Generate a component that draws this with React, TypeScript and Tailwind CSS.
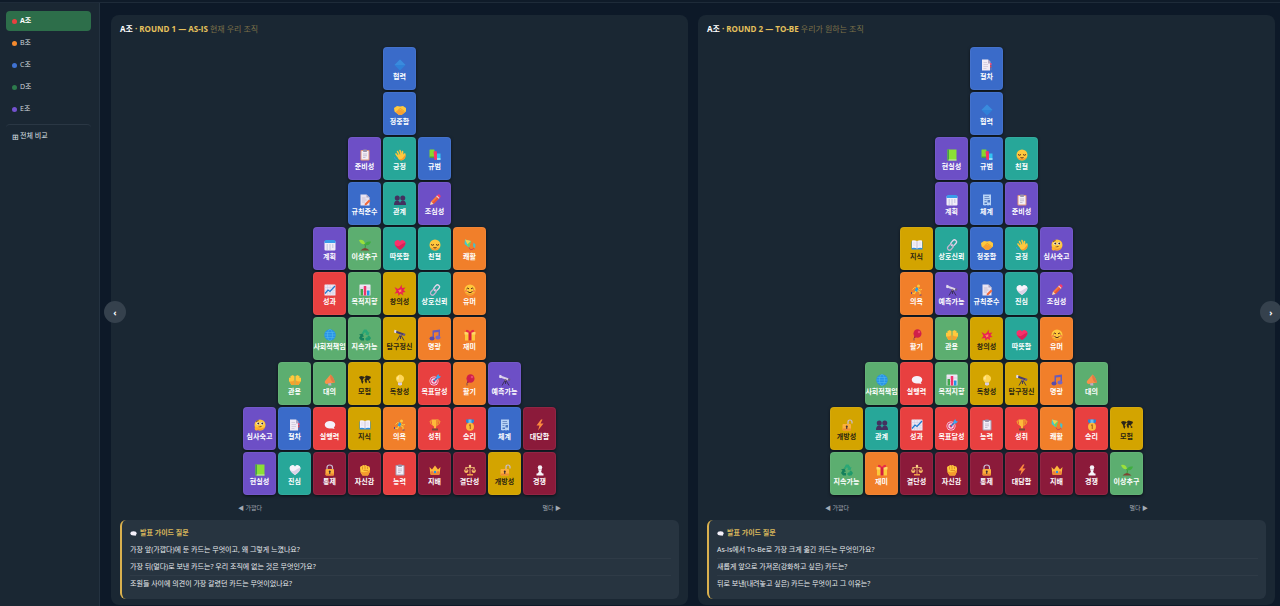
import React, { useState } from 'react';
import clsx from 'clsx';

const toneClass = {
  blue: 'bg-[#3a6bc9] text-white',
  teal: 'bg-[#27a799] text-white',
  purple: 'bg-[#6d4fc6] text-white',
  green: 'bg-[#5cae70] text-white',
  orange: 'bg-[#f17f2a] text-white',
  yellow: 'bg-[#d3a400] text-[#2b2412]',
  red: 'bg-[#e84040] text-white',
  maroon: 'bg-[#8b1a3a] text-white',
};

type Tone = keyof typeof toneClass;

// All drawings share a 24x24 view box
const clipboard = (board: string) => (
  <>
    <rect x="3" y="2" width="18" height="21" rx="2" fill={board} />
    <rect x="5" y="4" width="14" height="17" fill="#f3eef8" />
    <rect x="8" y="1" width="8" height="5" rx="1.5" fill="#9b93ab" />
    <path d="M8 10h8M8 13.5h8M8 17h5" stroke="#a99fb8" strokeWidth="1.2" />
  </>
);

const telescope = (tube: string, legs: string) => (
  <>
    <path d="M13 11 6 23M13 11l7 12M13 11v9" stroke={legs} strokeWidth="2" />
    <path d="m3 3 17 6-1.5 4L2 7Z" fill={tube} />
    <path d="m1 1.5 4 1L4 8.5 0 7Z" fill="#e2daf0" />
    <path d="m19 8 4 2-1.5 4-4-1Z" fill="#6b5a86" />
    <circle cx="13" cy="12" r="2" fill="#8a6f7d" />
  </>
);

const face = (
  <>
    <circle cx="12" cy="12" r="11" fill="#ffc83d" />
    <path d="M2 16a11 11 0 0 0 20 0q-10 7-20 0Z" fill="#f59a2e" />
  </>
);

const lock = (shackle: string) => (
  <>
    <path d={shackle} fill="none" stroke="#c9bcd3" strokeWidth="2.4" />
    <rect x="3" y="10" width="17" height="13" rx="2" fill="#fcb03c" />
    <path d="M3 19h17v2a2 2 0 0 1-2 2H5a2 2 0 0 1-2-2Z" fill="#ee8b35" />
    <circle cx="11.5" cy="15" r="2" fill="#3d2a35" />
    <path d="M10.5 15h2v5h-2z" fill="#3d2a35" />
  </>
);

const heartPath = 'M12 22C5 17 1 13 1 8a6 6 0 0 1 11-3 6 6 0 0 1 11 3c0 5-4 9-11 14Z';

const icons: Record<string, React.ReactNode> = {
  diamond: (
    <>
      <path d="M12 1 23 12 12 23 1 12Z" fill="#2f80d8" />
      <path d="M12 1 23 12H1Z" fill="#3a8bdd" />
    </>
  ),
  handshake: (
    <>
      <path d="M0 8 6 4l6 1 6-1 6 4v7l-9 7h-5l-9-7Z" fill="#ffc83d" />
      <path d="m3 16 5-4 5-1 9 6-7 5h-5Z" fill="#f7a032" />
      <path d="m9 11 4-2 8 6" stroke="#dd8524" strokeWidth="1.2" fill="none" />
    </>
  ),
  clipboard: clipboard('#e49a78'),
  clipboardGrey: clipboard('#a6a0b5'),
  wave: (
    <>
      <path d="m7 14-3-4M10 11 7 5M14 10l-2-7M17 11l0-6" stroke="#ffc83d" strokeWidth="3.2" strokeLinecap="round" />
      <path d="m5 13 12-4 2 2q1-4 4-2 1 9-4 12-6 4-10-1Z" fill="#ffc83d" />
      <path d="M9 21q8 0 10-5l4-5q1 7-4 10-5 3-10 0Z" fill="#f59a2e" />
      <path d="M1 16q0 5 5 6" stroke="#3a9ce0" strokeWidth="2" fill="none" />
    </>
  ),
  books: (
    <>
      <rect x="1" y="1" width="10" height="16" rx="1" fill="#86d72f" />
      <path d="M1 15h10v3H2z" fill="#4c9a48" />
      <path d="m9 5 6-1 3 17-7 1Z" fill="#f8336a" />
      <path d="M16 9h7v13h-7z" fill="#32c3f3" />
      <path d="M16 19h7v2h-7z" fill="#e5f7ff" />
    </>
  ),
  memo: (
    <>
      <path d="M3 1h12l6 6v16H3Z" fill="#e9e3f1" />
      <path d="m15 1 6 6h-6Z" fill="#b0a5bf" />
      <path d="M6 8h7M6 12h9M6 16h6" stroke="#b9afc6" strokeWidth="1.3" />
      <path d="m12 19 8-8 3 3-8 8-4 1Z" fill="#f2683a" />
    </>
  ),
  people: (
    <>
      <circle cx="6.5" cy="8" r="5" fill="#43305f" />
      <circle cx="17.5" cy="8" r="5" fill="#43305f" />
      <path d="M0 22q0-8 5-9h3q3 1 4 5 1-4 4-5h3q5 1 5 9Z" fill="#43305f" />
    </>
  ),
  pencil: (
    <>
      <path d="m4 15 12-12 5 5L9 20Z" fill="#fa7a3c" />
      <path d="m6.5 17.5 12-12L21 8 9 20Z" fill="#e5523b" />
      <path d="m16 3 2-2q2-1 4 1t1 4l-2 2Z" fill="#f83b6b" />
      <path d="m14.5 4.5 1.5-1.5 5 5-1.5 1.5Z" fill="#e0d6ea" />
      <path d="m4 15 5 5-7 2Z" fill="#ffd9a8" />
    </>
  ),
  calendar: (
    <>
      <rect x="1" y="4" width="22" height="19" rx="2" fill="#f1edf8" />
      <path d="M1 8V5q0-3 3-3h16q3 0 3 3v3Z" fill="#3a9cea" />
      <path d="M5 12h3M10.5 12h3M16 12h3M5 16h3M10.5 16h3M16 16h3M5 20h3M10.5 20h3" stroke="#a9aed6" strokeWidth="1.8" />
    </>
  ),
  seedling: (
    <>
      <path d="M12 19q2-6-1-10" stroke="#3d9a3c" strokeWidth="2.2" fill="none" />
      <path d="M12 10Q3 12 0 2q10-2 12 8Z" fill="#9be03a" />
      <path d="M12 12q0-8 12-7-2 9-12 7Z" fill="#3fae3f" />
      <path d="M3 23q9-10 18 0Z" fill="#7d4533" />
    </>
  ),
  heart: (
    <>
      <path d={heartPath} fill="#f8316b" />
      <path d="M12 22C7 19 3 15 2 11q5 6 10 2t11-6c0 6-4 10-11 15Z" fill="#d92258" />
    </>
  ),
  whiteHeart: (
    <>
      <path d={heartPath} fill="#f7f3fb" />
      <path d="M12 22C7 19 3 15 2 11q5 6 10 2t11-6c0 6-4 10-11 15Z" fill="#ddd3e8" />
    </>
  ),
  relieved: (
    <>
      {face}
      <path d="M4 11q3 3 6 0M14 11q3 3 6 0M9 17q3 2 6 0" stroke="#5c2c1a" strokeWidth="2" fill="none" />
    </>
  ),
  smile: (
    <>
      {face}
      <circle cx="4" cy="14" r="2" fill="#f9764b" />
      <circle cx="20" cy="14" r="2" fill="#f9764b" />
      <path d="M5 10q2.5-4 5 0M14 10q2.5-4 5 0M7 15q5 5 10 0" stroke="#5c2c1a" strokeWidth="2" fill="none" />
    </>
  ),
  thinking: (
    <>
      {face}
      <circle cx="8" cy="9" r="3" fill="#fff" />
      <circle cx="16" cy="9" r="3" fill="#fff" />
      <circle cx="8.5" cy="9" r="2" fill="#3d2320" />
      <circle cx="16.5" cy="9" r="2" fill="#3d2320" />
      <path d="m4 5 5-2M9 16l6-1" stroke="#5c2c1a" strokeWidth="1.6" />
      <path d="M2 16q2-2 3 1l6-2q2 1 0 2l-4 2q2 4-3 4-4-2-2-7Z" fill="#ffb02e" />
    </>
  ),
  kite: (
    <>
      <path d="M2 1 14 4 10 17 1 10Z" fill="#3fcbd0" />
      <path d="M2 1 14 4 7 11Z" fill="#f5d04c" />
      <path d="m14 4-4 13-3-6Z" fill="#7bd44a" />
      <path d="M10 17q3 7 6 4t5-1" stroke="#c63a5f" strokeWidth="1.8" fill="none" />
      <path d="m19 7 4 4-1 8-4-5Z" fill="#42c2ce" />
    </>
  ),
  chartUp: (
    <>
      <rect x="1" y="1" width="22" height="22" rx="1" fill="#ece7f3" />
      <path d="M1 7h22M1 12.5h22M1 18h22M7 1v22M12.5 1v22M18 1v22" stroke="#cbc3d8" strokeWidth=".8" />
      <path d="m2 19 6-7 4 3 10-11" stroke="#1d78cf" strokeWidth="2.4" fill="none" />
    </>
  ),
  barChart: (
    <>
      <rect x="1" y="1" width="22" height="22" rx="1" fill="#ece7f3" />
      <path d="M1 8h22M1 15h22" stroke="#bfb6cd" strokeWidth=".8" />
      <path d="M3 10h5v13H3z" fill="#3fa64b" />
      <path d="M9.5 4h5v19h-5z" fill="#f0346c" />
      <path d="M16 13h5v10h-5z" fill="#2296e4" />
    </>
  ),
  burst: (
    <>
      <path d="m12 7 3-6 1 7 7-1-4 5 4 4-6 1 2 6-6-4-4 5-1-6-7 1 4-5-4-8 7 4Z" fill="#e92350" />
      <path d="m12 10 1 1.5h3l-2 2 1 3-3-1-2 2v-3l-2-2h3Z" fill="#ff8a5c" />
    </>
  ),
  link: (
    <g fill="none" strokeWidth="2.6">
      <rect x="11" y="1" width="8" height="13" rx="4" transform="rotate(42 15 8)" stroke="#e1d8ec" />
      <rect x="5" y="10" width="8" height="13" rx="4" transform="rotate(42 9 16)" stroke="#c1b4d0" />
    </g>
  ),
  globe: (
    <>
      <circle cx="12" cy="12" r="11.5" fill="#2793e8" />
      <path d="M1 12h22M3 7h18M3 17h18" stroke="#55b8ec" strokeWidth="1.2" />
      <ellipse cx="12" cy="12" rx="5" ry="11" stroke="#55b8ec" strokeWidth="1.2" fill="none" />
    </>
  ),
  recycle: (
    <>
      <path d="m6 8 4-7h5l4 6 2-1-2 7-7-2 2-1-2-4-3 5Z" fill="#2aa776" />
      <path d="m0 11 7-2 3 7-2-1-2 3h4v5H4l-4-5 3-5Z" fill="#14805c" />
      <path d="m20 13 4 5-3 5h-4v2l-5-5 5-5v2h2l-2-2Z" fill="#1f9a6c" />
    </>
  ),
  telescope: telescope('#4d4069', '#473a52'),
  telescopeLight: telescope('#d8cfe8', '#3b2f5c'),
  note: (
    <>
      <path d="M7 3 22 1v16h-3V6L10 7v12H7Z" fill="#6a5bb8" />
      <ellipse cx="6" cy="19" rx="5" ry="4" fill="#5b4ba8" />
      <ellipse cx="18" cy="17" rx="5" ry="4" fill="#7566c4" />
    </>
  ),
  gift: (
    <>
      <path d="M2 10h20v13H2z" fill="#fdc93b" />
      <path d="M1 6h22v5H1z" fill="#ffd968" />
      <path d="M9 6h6v17H9z" fill="#d41d3f" />
      <path d="M12 7Q3 7 4 3q2-4 8 3 6-7 8-3 1 4-8 4Z" fill="#e92a4a" />
    </>
  ),
  palms: (
    <>
      <path d="M11 22H5L0 14V8q2-2 3 0V4q2-2 3 0V3q2-2 3 0v1q2-1 2 1Z" fill="#ffc83d" />
      <path d="M13 22h6l5-8V8q-2-2-3 0V4q-2-2-3 0V3q-2-2-3 0v1q-2-1-2 1Z" fill="#ffc83d" />
      <path d="M11 22H5l-4-7q6 1 10-3ZM13 22h6l4-7q-6 1-10-3Z" fill="#f5a12e" />
    </>
  ),
  megaphone: (
    <>
      <path d="M13 1q6 5 9 16L5 20q-5-2-3-6Z" fill="#f9904a" />
      <path d="M13 1q6 5 9 16-5 1-8-5t-1-11Z" fill="#e07a45" />
      <path d="m8 19 6-1 1 5H9Z" fill="#c3aacb" />
    </>
  ),
  map: (
    <path
      d="m0 6 4-2 5 1 3 2-3 2-2 4 2 1-2 6-2-3-1-5-3-4Zm12-1 3-2 8 2 1 3-3 2-1 4-3-2-2 1 1 3-2 3-2-4-1-4 2-2Zm7 10 3-1 1 3-3 1Z"
      fill="#2c2618"
    />
  ),
  bulb: (
    <>
      <path d="M8 17Q3 13 4 8t8-7q7 2 8 7t-4 9Z" fill="#ffd758" />
      <path d="M9 5q-2 2-1 6" stroke="#fff4c4" strokeWidth="2" fill="none" />
      <path d="M8 17h8v4l-2 2h-4l-2-2Z" fill="#d8cde2" />
    </>
  ),
  target: (
    <>
      <circle cx="10" cy="14" r="9" fill="#f2eaf6" />
      <circle cx="10" cy="14" r="6.5" fill="none" stroke="#ea3162" strokeWidth="2.2" />
      <circle cx="10" cy="14" r="3" fill="#ea3162" />
      <path d="m10 14 8-8" stroke="#2877c9" strokeWidth="2.4" />
      <path d="m15 9 0-5 4-4 1 4 4 1-4 4Z" fill="#3ba4f0" />
    </>
  ),
  balloon: (
    <>
      <path d="M8 15q-3 3-2 8" stroke="#59405f" strokeWidth="1.5" fill="none" />
      <ellipse cx="13" cy="9" rx="8" ry="8.5" fill="#cf1f4a" />
      <circle cx="16" cy="6" r="2.5" fill="#ea476f" />
      <path d="m7 14 3 3-4 1Z" fill="#a3173c" />
    </>
  ),
  tabs: (
    <>
      <path d="M2 1h12l4 4v18H2Z" fill="#f1ebf6" />
      <path d="m14 1 5 4v4h-5Z" fill="#b5aac4" />
      <path d="M5 7h7M5 11h9M5 15h9M5 19h6" stroke="#c4bad0" strokeWidth="1.2" />
      <path d="M18 8h3v4h-3z" fill="#f0507c" />
      <path d="M18 13h3v4h-3z" fill="#e34c4c" />
      <path d="M18 18h4v4h-4z" fill="#5a6fb9" />
    </>
  ),
  speech: (
    <>
      <ellipse cx="12" cy="11.5" rx="10.5" ry="7.5" fill="#f5f1fa" />
      <path d="m13 18 6-3 2 5Z" fill="#f5f1fa" />
    </>
  ),
  openBook: (
    <>
      <path d="M1 5h22v16H1z" fill="#2f8fe0" />
      <path d="M2 3q6-1 10 1v15q-4-2-10-1ZM22 3q-6-1-10 1v15q4-2 10-1Z" fill="#f5f1fa" />
      <path d="M12 4v15" stroke="#a89dba" strokeWidth="1.2" />
      <path d="M4 8h5M4 12h5M15 8h5M15 12h5" stroke="#d3cbdc" />
    </>
  ),
  runner: (
    <>
      <circle cx="15" cy="4" r="3" fill="#ffc83d" />
      <path d="m8 6 6 2 1 6-5 2-3-3 2-3Z" fill="#2e9be0" />
      <path d="m3 11 4-4 3 1M14 9l4 3 4-1" stroke="#ffc83d" strokeWidth="2" fill="none" />
      <path d="m10 14-3 5-6-1M13 13l5 3v6" stroke="#ffc83d" strokeWidth="2.4" fill="none" />
      <path d="M1 16v4M17 22h4" stroke="#62408a" strokeWidth="2.4" />
    </>
  ),
  trophy: (
    <>
      <path d="M5 4H2q0 7 6 8M19 4h3q0 7-6 8" stroke="#f5a12e" strokeWidth="2" fill="none" />
      <path d="M5 1h14q0 12-5 14v4h-4v-4Q5 13 5 1Z" fill="#fdb93b" />
      <path d="M14 1h5q0 12-5 14Z" fill="#ee8c30" />
      <path d="M6 19h12v4H6z" fill="#7a4736" />
    </>
  ),
  medal: (
    <>
      <path d="M4 1h16v5l-6 5h-4L4 6Z" fill="#2d86d3" />
      <path d="M9 1h6v8H9z" fill="#71bdf0" />
      <circle cx="12" cy="15.5" r="8" fill="#fdb93b" />
      <path d="m10 13 2.5-2v9" stroke="#a85b1c" strokeWidth="2" fill="none" />
    </>
  ),
  receipt: (
    <>
      <path d="M4 1h16v22l-3-1-3 1-3-1-3 1-4-1Z" fill="#b7d2f5" />
      <path d="M7 5h9M7 9h10M7 13h4" stroke="#5c7dbb" strokeWidth="1.6" />
      <path d="M13 12h5v5h-5zM7 17h5v3H7z" fill="#4d78c2" />
    </>
  ),
  bolt: <path d="M14 1 5 13h6L8 23l11-14h-6l4-8Z" fill="#fb8a3e" />,
  greenBook: (
    <>
      <path d="M3 1h18v22H3z" fill="#8be036" />
      <path d="M3 1h3v22H3z" fill="#45a344" />
      <path d="M5 21h16v2H5z" fill="#c8e9b7" />
    </>
  ),
  lock: lock('M6 11V7q0-5 5.5-5T17 7v4'),
  unlock: lock('M14 11V6q0-4 4-4t4 4v3'),
  fist: (
    <>
      <path d="M2 7q1-4 4-3 2-3 5-1 3-2 5 1 5-1 6 4v7l-4 8H7l-4-6Z" fill="#ffc83d" />
      <path d="M3 15q9 4 19-3v3l-4 8H7Z" fill="#f59a2e" />
      <path d="M7 5v6M12 4v7M17 5v5M9 13h9" stroke="#d2761c" strokeWidth="1.3" />
    </>
  ),
  crown: (
    <>
      <path d="m1 6 5 5 6-8 6 8 5-5-2 15H3Z" fill="#fdb93b" />
      <path d="M3 17h18l-.5 5h-17Z" fill="#ee8c30" />
      <circle cx="12" cy="16" r="2.5" fill="#2e8fe0" />
      <circle cx="6" cy="16" r="1.5" fill="#e9315f" />
      <circle cx="18" cy="16" r="1.5" fill="#e9315f" />
    </>
  ),
  scales: (
    <>
      <path d="M12 2v19M3 7h18M4 7l-3 7M4 7l4 7M20 7l-4 7M20 7l3 7" stroke="#f6c776" strokeWidth="1.5" fill="none" />
      <path d="M0 13h9q-1 5-4.5 5T0 13ZM15 13h9q-1 5-4.5 5T15 13Z" fill="#f7bb62" />
      <path d="M6 20h12v3H6z" fill="#f09e48" />
      <circle cx="12" cy="4" r="2.5" fill="#fbd28b" />
    </>
  ),
  pawn: (
    <>
      <circle cx="12" cy="7" r="4.5" fill="#f6f2f8" />
      <path d="M8 11h8v2h-2q0 4 3 6h2v4H5v-4h2q3-2 3-6H8Z" fill="#f6f2f8" />
    </>
  ),
};

const cards: Record<string, [Tone, string]> = {
  협력: ['blue', 'diamond'],
  정중함: ['blue', 'handshake'],
  규범: ['blue', 'books'],
  규칙준수: ['blue', 'memo'],
  절차: ['blue', 'tabs'],
  체계: ['blue', 'receipt'],
  긍정: ['teal', 'wave'],
  관계: ['teal', 'people'],
  따뜻함: ['teal', 'heart'],
  친절: ['teal', 'relieved'],
  상호신뢰: ['teal', 'link'],
  진심: ['teal', 'whiteHeart'],
  준비성: ['purple', 'clipboard'],
  조심성: ['purple', 'pencil'],
  계획: ['purple', 'calendar'],
  예측가능: ['purple', 'telescopeLight'],
  심사숙고: ['purple', 'thinking'],
  현실성: ['purple', 'greenBook'],
  이상추구: ['green', 'seedling'],
  목적지향: ['green', 'barChart'],
  사회적책임: ['green', 'globe'],
  지속가능: ['green', 'recycle'],
  관용: ['green', 'palms'],
  대의: ['green', 'megaphone'],
  쾌활: ['orange', 'kite'],
  유머: ['orange', 'smile'],
  명랑: ['orange', 'note'],
  재미: ['orange', 'gift'],
  활기: ['orange', 'balloon'],
  의욕: ['orange', 'runner'],
  창의성: ['yellow', 'burst'],
  탐구정신: ['yellow', 'telescope'],
  모험: ['yellow', 'map'],
  독창성: ['yellow', 'bulb'],
  지식: ['yellow', 'openBook'],
  개방성: ['yellow', 'unlock'],
  성과: ['red', 'chartUp'],
  목표달성: ['red', 'target'],
  실행력: ['red', 'speech'],
  성취: ['red', 'trophy'],
  승리: ['red', 'medal'],
  능력: ['red', 'clipboardGrey'],
  대담함: ['maroon', 'bolt'],
  통제: ['maroon', 'lock'],
  자신감: ['maroon', 'fist'],
  지배: ['maroon', 'crown'],
  결단성: ['maroon', 'scales'],
  경쟁: ['maroon', 'pawn'],
};

const rounds = [
  {
    title: 'ROUND 1 — AS-IS',
    subtitle: '현재 우리 조직',
    rows: [
      '협력',
      '정중함',
      '준비성 긍정 규범',
      '규칙준수 관계 조심성',
      '계획 이상추구 따뜻함 친절 쾌활',
      '성과 목적지향 창의성 상호신뢰 유머',
      '사회적책임 지속가능 탐구정신 명랑 재미',
      '관용 대의 모험 독창성 목표달성 활기 예측가능',
      '심사숙고 절차 실행력 지식 의욕 성취 승리 체계 대담함',
      '현실성 진심 통제 자신감 능력 지배 결단성 개방성 경쟁',
    ],
    questions: [
      '가장 앞(가깝다)에 둔 카드는 무엇이고, 왜 그렇게 느꼈나요?',
      '가장 뒤(멀다)로 보낸 카드는? 우리 조직에 없는 것은 무엇인가요?',
      '조원들 사이에 의견이 가장 갈렸던 카드는 무엇이었나요?',
    ],
  },
  {
    title: 'ROUND 2 — TO-BE',
    subtitle: '우리가 원하는 조직',
    rows: [
      '절차',
      '협력',
      '현실성 규범 친절',
      '계획 체계 준비성',
      '지식 상호신뢰 정중함 긍정 심사숙고',
      '의욕 예측가능 규칙준수 진심 조심성',
      '활기 관용 창의성 따뜻함 유머',
      '사회적책임 실행력 목적지향 독창성 탐구정신 명랑 대의',
      '개방성 관계 성과 목표달성 능력 성취 쾌활 승리 모험',
      '지속가능 재미 결단성 자신감 통제 대담함 지배 경쟁 이상추구',
    ],
    questions: [
      'As-Is에서 To-Be로 가장 크게 옮긴 카드는 무엇인가요?',
      '새롭게 앞으로 가져온(강화하고 싶은) 카드는?',
      '뒤로 보낸(내려놓고 싶은) 카드는 무엇이고 그 이유는?',
    ],
  },
];

const teams = [
  { name: 'A조', dot: 'bg-[#e84040]' },
  { name: 'B조', dot: 'bg-[#f58a2e]' },
  { name: 'C조', dot: 'bg-[#3f72d2]' },
  { name: 'D조', dot: 'bg-[#2d7a4c]' },
  { name: 'E조', dot: 'bg-[#7352cf]' },
];

function Icon({ name, className }: { name: string; className: string }) {
  return (
    <svg viewBox="0 0 24 24" fill="none" aria-hidden="true" className={className}>
      {icons[name]}
    </svg>
  );
}

function Card({ name }: { name: string }) {
  const [tone, icon] = cards[name];
  return (
    <div
      className={clsx(
        'flex h-[43px] w-[33px] flex-col items-center justify-center gap-px rounded border border-white/5 pt-[3px] shadow-[0_1px_3px_rgba(0,0,0,0.6)]',
        toneClass[tone],
      )}
    >
      <Icon name={icon} className="h-3 w-3 shrink-0" />
      <span className="whitespace-nowrap text-[7px] font-bold leading-[10px]">{name}</span>
    </div>
  );
}

function RoundPanel({ team, round }: { team: string; round: (typeof rounds)[number] }) {
  return (
    <section className="min-w-0 flex-1 rounded-lg bg-[#1a2733] px-[9px] pb-1.5 pt-[9px]">
      <h2 className="mb-[13px] text-[8px] font-bold leading-[10px] text-[#e6c15c]">
        <span className="text-white">{team}</span> · {round.title}{' '}
        <span className="font-normal text-[#7c7149]">{round.subtitle}</span>
      </h2>

      {/* Card pyramid */}
      <div className="flex flex-col gap-0.5">
        {round.rows.map((row) => (
          <div key={row} className="flex justify-center gap-0.5">
            {row.split(' ').map((name) => (
              <Card key={name} name={name} />
            ))}
          </div>
        ))}
      </div>

      <div className="mx-auto mt-2 flex max-w-[323px] justify-between text-[6px] leading-[10px] text-[#a3abb4]">
        <span>◀ 가깝다</span>
        <span>멀다 ▶</span>
      </div>

      {/* Guide questions */}
      <div className="mt-[7px] rounded-md border-l-2 border-[#d9b04e] bg-[#273440] px-2 pb-1.5 pt-[7px]">
        <h3 className="mb-[3px] flex items-center gap-[3px] text-[7px] font-bold leading-3 text-[#d9b75c]">
          <Icon name="speech" className="h-[7px] w-[7px]" />
          발표 가이드 질문
        </h3>
        <ul className="text-[7px] text-[#e8ebee]">
          {round.questions.map((question) => (
            <li key={question} className="border-b border-white/[0.04] leading-4 last:border-transparent">
              {question}
            </li>
          ))}
        </ul>
      </div>
    </section>
  );
}

export default function App() {
  const [team, setTeam] = useState('A조');

  return (
    <div className="flex min-h-screen flex-col overflow-hidden bg-[#0d1928] font-['Open_Sans','Noto_Sans_CJK_KR',sans-serif]">
      <div className="h-[3px] border-b border-[#1e2b39] bg-[#0f1b29]" />
      <div className="flex flex-1">
        <aside className="w-[100px] shrink-0 border-r border-[#243240] bg-[#1a2733] pl-1.5 pr-2 pt-2">
          <nav className="flex flex-col gap-0.5">
            {teams.map(({ name, dot }) => (
              <button
                key={name}
                onClick={() => setTeam(name)}
                className={clsx(
                  'flex h-5 items-center gap-[3px] rounded px-1.5 text-[7px]',
                  name === team ? 'bg-[#2d6e4a] font-bold text-white' : 'text-[#d3d8dd]',
                )}
              >
                <span className={clsx('h-[5px] w-[5px] rounded-full', dot)} />
                {name}
              </button>
            ))}
          </nav>
          <button className="mt-[5px] flex h-6 w-full items-center gap-px rounded border-t border-[#2a3744] px-1.5 text-[7px] text-[#dfe3e7]">
            <span className="text-[8px] leading-none">⊞</span>
            전체 비교
          </button>
        </aside>

        <main className="relative flex min-w-0 flex-1 items-start gap-2.5 pl-[11px] pr-[5px] pt-3">
          {rounds.map((round) => (
            <RoundPanel key={round.title} team={team} round={round} />
          ))}
          <button
            aria-label="이전"
            className="absolute left-1 top-[298px] flex h-[22px] w-[22px] items-center justify-center rounded-full bg-[#35414d] text-[9px] font-bold leading-none text-white"
          >
            ‹
          </button>
          <button
            aria-label="다음"
            className="absolute -right-0.5 top-[298px] flex h-[22px] w-[22px] items-center justify-center rounded-full bg-[#35414d] text-[9px] font-bold leading-none text-white"
          >
            ›
          </button>
        </main>
      </div>
    </div>
  );
}
